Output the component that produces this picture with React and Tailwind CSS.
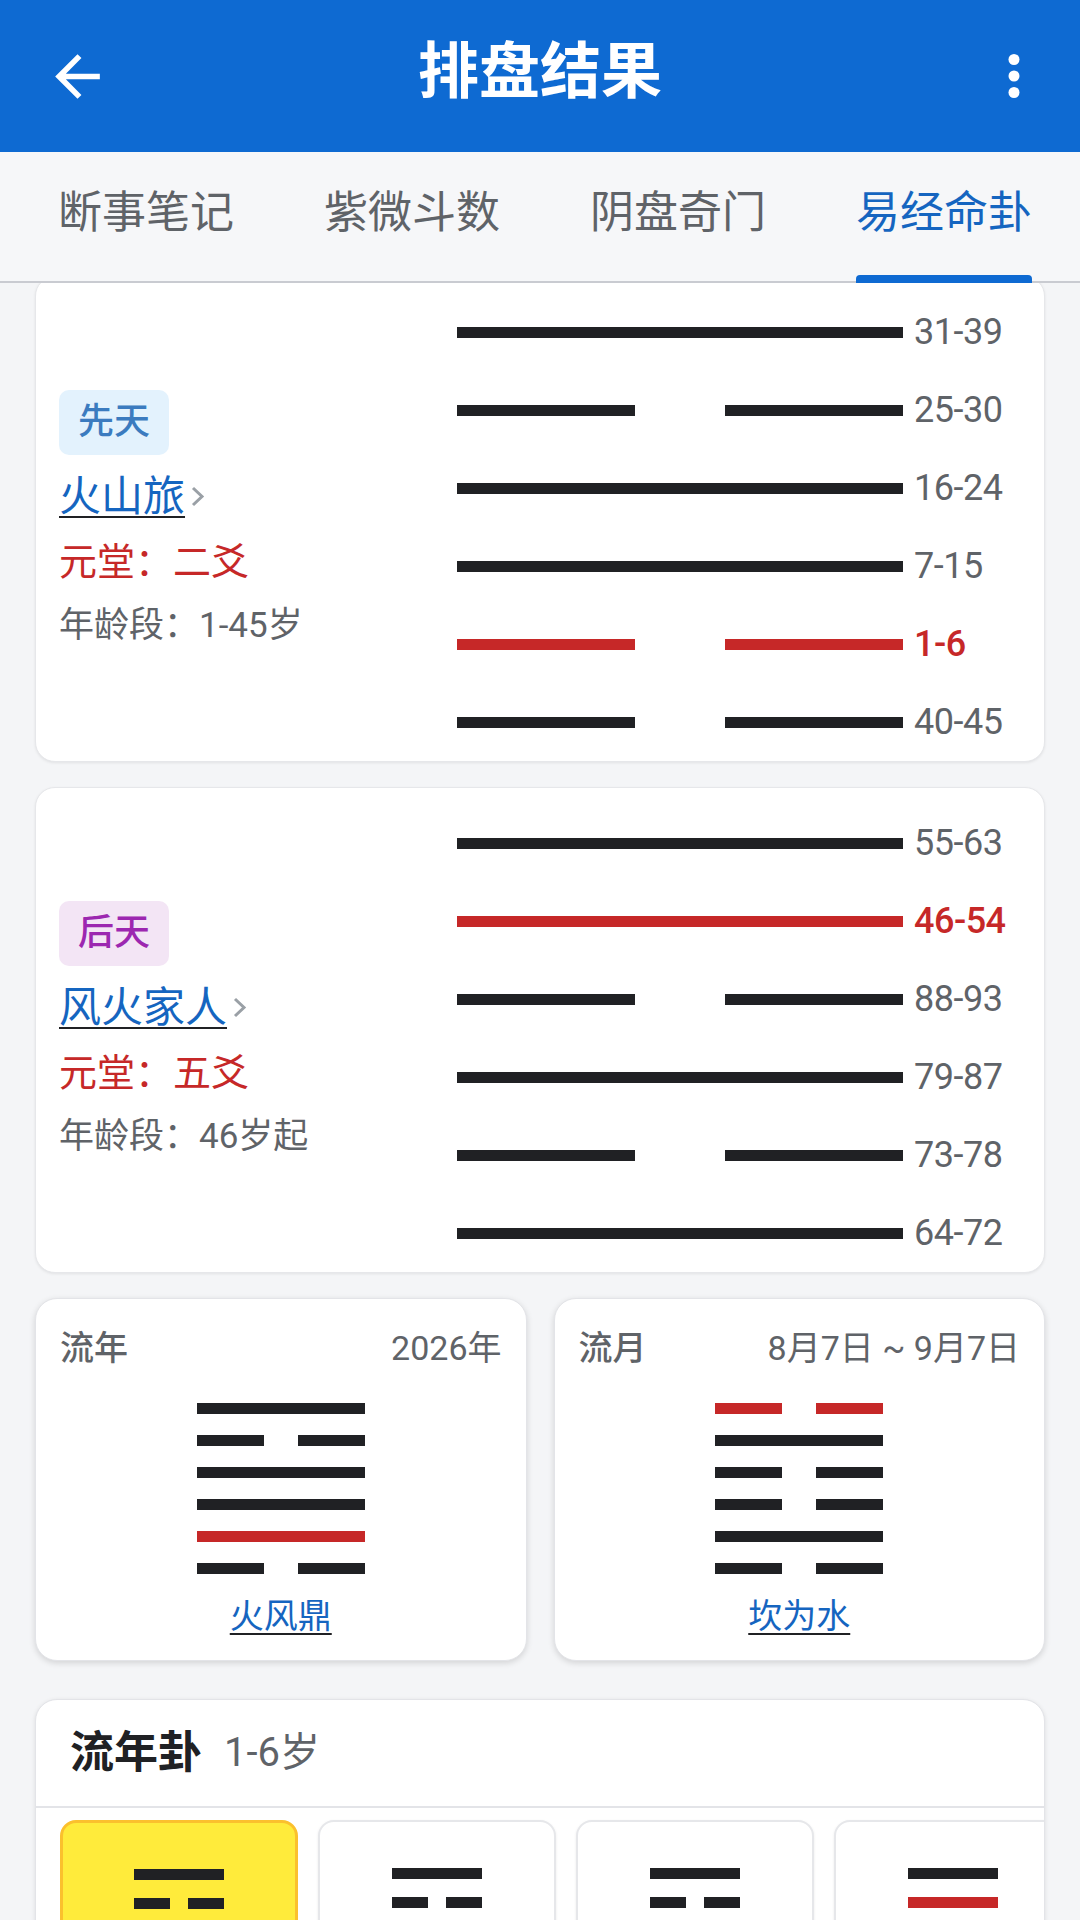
const INK = '#202124';
const RED = '#c62828';

const tabs = ['断事笔记', '紫微斗数', '阴盘奇门', '易经命卦'];

// top → bottom
const xiantian = [
  { yang: true, label: '31-39' },
  { yang: false, label: '25-30' },
  { yang: true, label: '16-24' },
  { yang: true, label: '7-15' },
  { yang: false, label: '1-6', red: true },
  { yang: false, label: '40-45' },
];

const houtian = [
  { yang: true, label: '55-63' },
  { yang: true, label: '46-54', red: true },
  { yang: false, label: '88-93' },
  { yang: true, label: '79-87' },
  { yang: false, label: '73-78' },
  { yang: true, label: '64-72' },
];

const liunian = [
  { yang: true }, { yang: false }, { yang: true }, { yang: true }, { yang: true, red: true }, { yang: false },
];
const liuyue = [
  { yang: false, red: true }, { yang: true }, { yang: false }, { yang: false }, { yang: true }, { yang: false },
];

const tiles = [
  { active: true, lines: [{ yang: true }, { yang: false }] },
  { lines: [{ yang: true }, { yang: false }] },
  { lines: [{ yang: true }, { yang: false }] },
  { lines: [{ yang: true }, { yang: true, red: true }] },
];

function Yao({ yang, red, width, height = 11, seg }) {
  const color = red ? RED : INK;
  if (yang) return <div style={{ width, height, background: color }} />;
  return (
    <div className="flex justify-between" style={{ width, height }}>
      <div style={{ width: seg, height, background: color }} />
      <div style={{ width: seg, height, background: color }} />
    </div>
  );
}

function Chevron() {
  return (
    <svg width="15" height="23" viewBox="0 0 15 23" className="ml-[5px]">
      <path d="M3 3 L12 11.5 L3 20" fill="none" stroke="#9aa0a6" strokeWidth="3" />
    </svg>
  );
}

function GuaCard({ tag, tagClass, name, yuan, age, lines, className = '' }) {
  return (
    <div className={`flex items-center rounded-[20px] border border-[#e6e7ea] bg-white shadow-[0_1px_3px_rgba(0,0,0,0.08)] ${className}`}>
      <div className="w-[421px] pl-[23px]">
        <div className={`inline-flex h-[65px] w-[110px] items-center justify-center rounded-[10px] text-[36px] font-medium ${tagClass}`}>
          {tag}
        </div>
        <div className="mt-[14px] flex items-center">
          <span className="text-[42px] leading-[55px] text-[#1565c0] underline decoration-[#202124] decoration-2 underline-offset-[5px]">
            {name}
          </span>
          <Chevron />
        </div>
        <div className="mt-[13px] text-[38px] leading-[50px] text-[#c62828]">{yuan}</div>
        <div className="mt-[16px] text-[35px] leading-[46px] text-[#5f6368]">{age}</div>
      </div>
      <div className="self-stretch pt-[16px]">
        {lines.map((l, i) => (
          <div key={i} className="flex h-[78px] items-center">
            <Yao yang={l.yang} red={l.red} width={446} seg={178} />
            <span
              className={`ml-[11px] text-[36px] tracking-[-0.5px] ${l.red ? 'font-medium text-[#c62828]' : 'text-[#5f6368]'}`}
            >
              {l.label}
            </span>
          </div>
        ))}
      </div>
    </div>
  );
}

function SmallCard({ title, right, name, lines }) {
  return (
    <div className="h-[363px] rounded-[22px] border border-[#e3e4e8] bg-white px-[24px] pt-[27px] shadow-[0_2px_6px_rgba(0,0,0,0.14)]">
      <div className="flex items-center justify-between leading-[44px]">
        <span className="text-[34px] font-medium text-[#5f6368]">{title}</span>
        <span className="text-[34px] text-[#5f6368]">{right}</span>
      </div>
      <div className="mt-[33px] flex flex-col items-center gap-[21px]">
        {lines.map((l, i) => (
          <Yao key={i} yang={l.yang} red={l.red} width={168} seg={67} />
        ))}
      </div>
      <div className="mt-[20px] text-center text-[34px] leading-[44px]">
        <span className="text-[#1565c0] underline decoration-[#202124] decoration-2 underline-offset-[5px]">{name}</span>
      </div>
    </div>
  );
}

export default function App() {
  return (
    <div className="flex h-[1920px] w-[1080px] flex-col overflow-hidden bg-[#f4f5f7] font-['Roboto','Noto_Sans_CJK_SC',sans-serif]">
      {/* app bar */}
      <header className="grid h-[152px] shrink-0 grid-cols-[1fr_auto_1fr] items-center bg-[#0e6ad2]">
        <div className="pl-[44px]">
          <svg width="67" height="67" viewBox="0 0 24 24">
            <path d="M20 11H7.83l5.59-5.59L12 4l-8 8 8 8 1.41-1.41L7.83 13H20v-2z" fill="#fff" />
          </svg>
        </div>
        <h1 className="pb-[6px] text-[61px] font-bold text-white">排盘结果</h1>
        <div className="flex justify-end pr-[33px]">
          <svg width="66" height="66" viewBox="0 0 24 24">
            <circle cx="12" cy="6" r="2" fill="#fff" />
            <circle cx="12" cy="12" r="2" fill="#fff" />
            <circle cx="12" cy="18" r="2" fill="#fff" />
          </svg>
        </div>
      </header>

      {/* tabs */}
      <nav className="relative z-10 flex h-[131px] shrink-0 border-b-2 border-[#c9cbd1] bg-[#f6f7f9] pl-[13px]">
        {tabs.map((t, i) => {
          const active = i === tabs.length - 1;
          return (
            <div key={t} className="flex h-full w-[266px] shrink-0 justify-center">
              <div className="flex h-full flex-col">
                <div
                  className={`flex flex-1 items-center pb-[2px] text-[44px] ${active ? 'text-[#1565c0]' : 'text-[#5f6368]'}`}
                >
                  {t}
                </div>
                <div className={`-mb-[2px] h-[8px] rounded-t-[4px] ${active ? 'bg-[#0e6ad2]' : ''}`} />
              </div>
            </div>
          );
        })}
      </nav>

      {/* scroll content */}
      <main className="flex-1 overflow-hidden px-[35px]">
        <GuaCard
          className="-mt-[7px]"
          tag="先天"
          tagClass="bg-[#e3f2fd] text-[#3b7bbf]"
          name="火山旅"
          yuan="元堂：二爻"
          age="年龄段：1-45岁"
          lines={xiantian}
        />
        <GuaCard
          className="mt-[25px]"
          tag="后天"
          tagClass="bg-[#f3e5f5] text-[#9c27b0]"
          name="风火家人"
          yuan="元堂：五爻"
          age="年龄段：46岁起"
          lines={houtian}
        />

        <div className="mt-[25px] grid grid-cols-2 gap-[27px]">
          <SmallCard title="流年" right="2026年" name="火风鼎" lines={liunian} />
          <SmallCard title="流月" right="8月7日 ~ 9月7日" name="坎为水" lines={liuyue} />
        </div>

        <section className="mt-[38px] h-[400px] overflow-hidden rounded-t-[22px] border border-[#e3e4e8] bg-white shadow-[0_1px_4px_rgba(0,0,0,0.1)]">
          <div className="flex h-[108px] items-center border-b-2 border-[#e3e4e8] px-[34px]">
            <span className="text-[44px] font-bold text-[#202124]">流年卦</span>
            <span className="ml-[22px] text-[40px] text-[#5f6368]">1-6岁</span>
          </div>
          <div className="flex gap-[20px] pl-[24px] pt-[12px]">
            {tiles.map((tile, i) => (
              <div
                key={i}
                className={`flex h-[220px] w-[238px] shrink-0 flex-col items-center gap-[18px] rounded-[16px] pt-[46px] ${
                  tile.active
                    ? 'border-[3px] border-[#fbc02d] bg-[#ffeb3b]'
                    : 'border-2 border-[#e6e7ea] bg-white shadow-[0_1px_3px_rgba(0,0,0,0.08)]'
                }`}
              >
                {tile.lines.map((l, j) => (
                  <Yao key={j} yang={l.yang} red={l.red} width={90} seg={36} />
                ))}
              </div>
            ))}
          </div>
        </section>
      </main>
    </div>
  );
}
